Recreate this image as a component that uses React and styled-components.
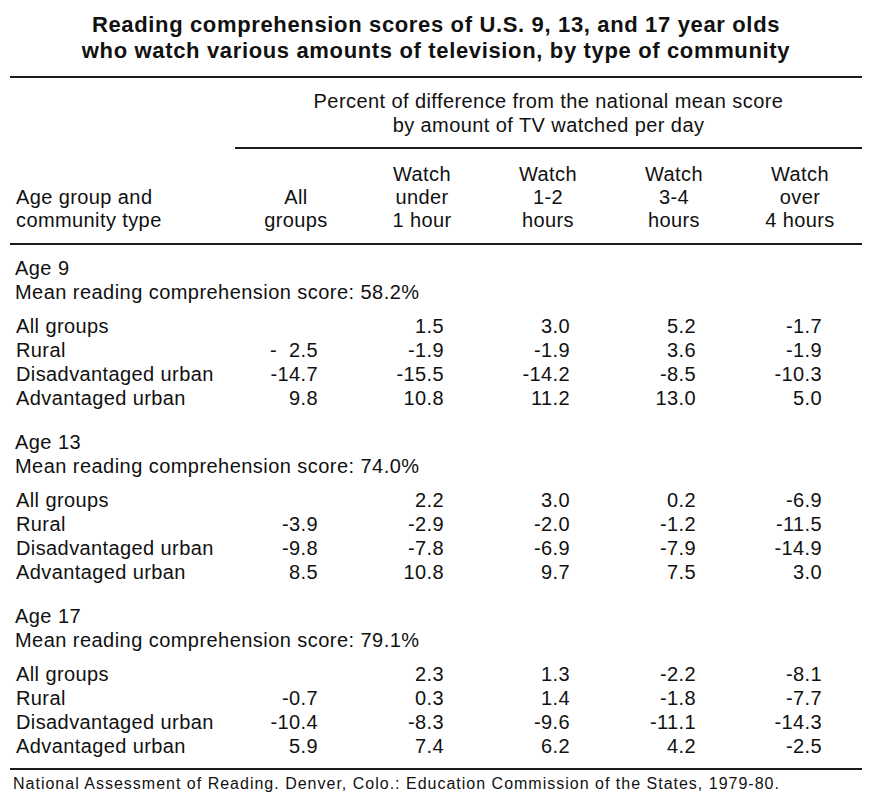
import React from "react";
import styled, { createGlobalStyle } from "styled-components";

const GlobalStyle = createGlobalStyle`
  body {
    margin: 0;
    background: #ffffff;
    color: #111111;
    font-family: "Liberation Sans", Arial, Helvetica, sans-serif;
  }
`;

const Sheet = styled.div`
  width: 852px;
  padding: 12px 0 0 10px;
`;

const Title = styled.h1`
  margin: 0 0 12px;
  text-align: center;
  font-size: 22px;
  line-height: 26px;
  font-weight: bold;
  letter-spacing: 0.65px;
`;

const Rule = styled.div`
  height: 2px;
  margin-left: ${(props) => props.$inset || 0}px;
  margin-top: ${(props) => props.$gap || 0}px;
  background: #1c1c1c;
`;

const Spanner = styled.div`
  margin-left: 225px;
  padding: 11px 0 10px;
  text-align: center;
  font-size: 20px;
  line-height: 24px;
  letter-spacing: 0.42px;
`;

const Grid = styled.div`
  display: grid;
  grid-template-columns: 182px repeat(5, 126px) 1fr;
  font-size: 20px;
  letter-spacing: 0.4px;
`;

const HeadRow = styled(Grid)`
  padding: 14px 0 11px;
  line-height: 23px;
`;

const HeadLabel = styled.div`
  align-self: end;
  padding-left: 6px;
`;

const ColHead = styled.div`
  display: flex;
  flex-direction: column;
  align-items: center;
  justify-content: flex-end;
  padding-left: 82px;
  white-space: nowrap;
`;

const Section = styled.section`
  padding-top: 11px;
  & + & {
    padding-top: 20px;
  }
`;

const Caption = styled.div`
  padding-left: 5px;
  font-size: 20px;
  line-height: 24px;
  letter-spacing: 0.45px;
`;

const Rows = styled.div`
  margin-top: 10px;
`;

const DataRow = styled(Grid)`
  line-height: 24px;
`;

const Label = styled.div`
  padding-left: 6px;
  white-space: nowrap;
`;

const Num = styled.div`
  text-align: right;
  white-space: pre;
`;

const Source = styled.p`
  margin: 0;
  padding: 5px 0 0 3px;
  font-size: 16px;
  line-height: 18px;
  letter-spacing: 1px;
  white-space: nowrap;
`;

const columns = [
  ["All", "groups"],
  ["Watch", "under", "1 hour"],
  ["Watch", "1-2", "hours"],
  ["Watch", "3-4", "hours"],
  ["Watch", "over", "4 hours"],
];

const sections = [
  {
    age: "Age 9",
    mean: "58.2%",
    rows: [
      ["All groups", "", "1.5", "3.0", "5.2", "-1.7"],
      ["Rural", "-\u00a0\u00a02.5", "-1.9", "-1.9", "3.6", "-1.9"],
      ["Disadvantaged urban", "-14.7", "-15.5", "-14.2", "-8.5", "-10.3"],
      ["Advantaged urban", "9.8", "10.8", "11.2", "13.0", "5.0"],
    ],
  },
  {
    age: "Age 13",
    mean: "74.0%",
    rows: [
      ["All groups", "", "2.2", "3.0", "0.2", "-6.9"],
      ["Rural", "-3.9", "-2.9", "-2.0", "-1.2", "-11.5"],
      ["Disadvantaged urban", "-9.8", "-7.8", "-6.9", "-7.9", "-14.9"],
      ["Advantaged urban", "8.5", "10.8", "9.7", "7.5", "3.0"],
    ],
  },
  {
    age: "Age 17",
    mean: "79.1%",
    rows: [
      ["All groups", "", "2.3", "1.3", "-2.2", "-8.1"],
      ["Rural", "-0.7", "0.3", "1.4", "-1.8", "-7.7"],
      ["Disadvantaged urban", "-10.4", "-8.3", "-9.6", "-11.1", "-14.3"],
      ["Advantaged urban", "5.9", "7.4", "6.2", "4.2", "-2.5"],
    ],
  },
];

const App = () => {
  return (
    <>
      <GlobalStyle />
      <Sheet>
        <Title>
          Reading comprehension scores of U.S. 9, 13, and 17 year olds
          <br />
          who watch various amounts of television, by type of community
        </Title>
        <Rule />
        <Spanner>
          Percent of difference from the national mean score
          <br />
          by amount of TV watched per day
        </Spanner>
        <Rule $inset={225} />
        <HeadRow>
          <HeadLabel>
            Age group and
            <br />
            community type
          </HeadLabel>
          {columns.map((lines, i) => (
            <ColHead key={i}>
              {lines.map((line) => (
                <span key={line}>{line}</span>
              ))}
            </ColHead>
          ))}
        </HeadRow>
        <Rule />
        {sections.map((s) => (
          <Section key={s.age}>
            <Caption>{s.age}</Caption>
            <Caption>Mean reading comprehension score: {s.mean}</Caption>
            <Rows>
              {s.rows.map(([label, ...values]) => (
                <DataRow key={label}>
                  <Label>{label}</Label>
                  {values.map((v, i) => (
                    <Num key={i}>{v}</Num>
                  ))}
                </DataRow>
              ))}
            </Rows>
          </Section>
        ))}
        <Rule $gap={10} />
        <Source>
          National Assessment of Reading. Denver, Colo.: Education Commission of
          the States, 1979-80.
        </Source>
      </Sheet>
    </>
  );
};

export default App;
